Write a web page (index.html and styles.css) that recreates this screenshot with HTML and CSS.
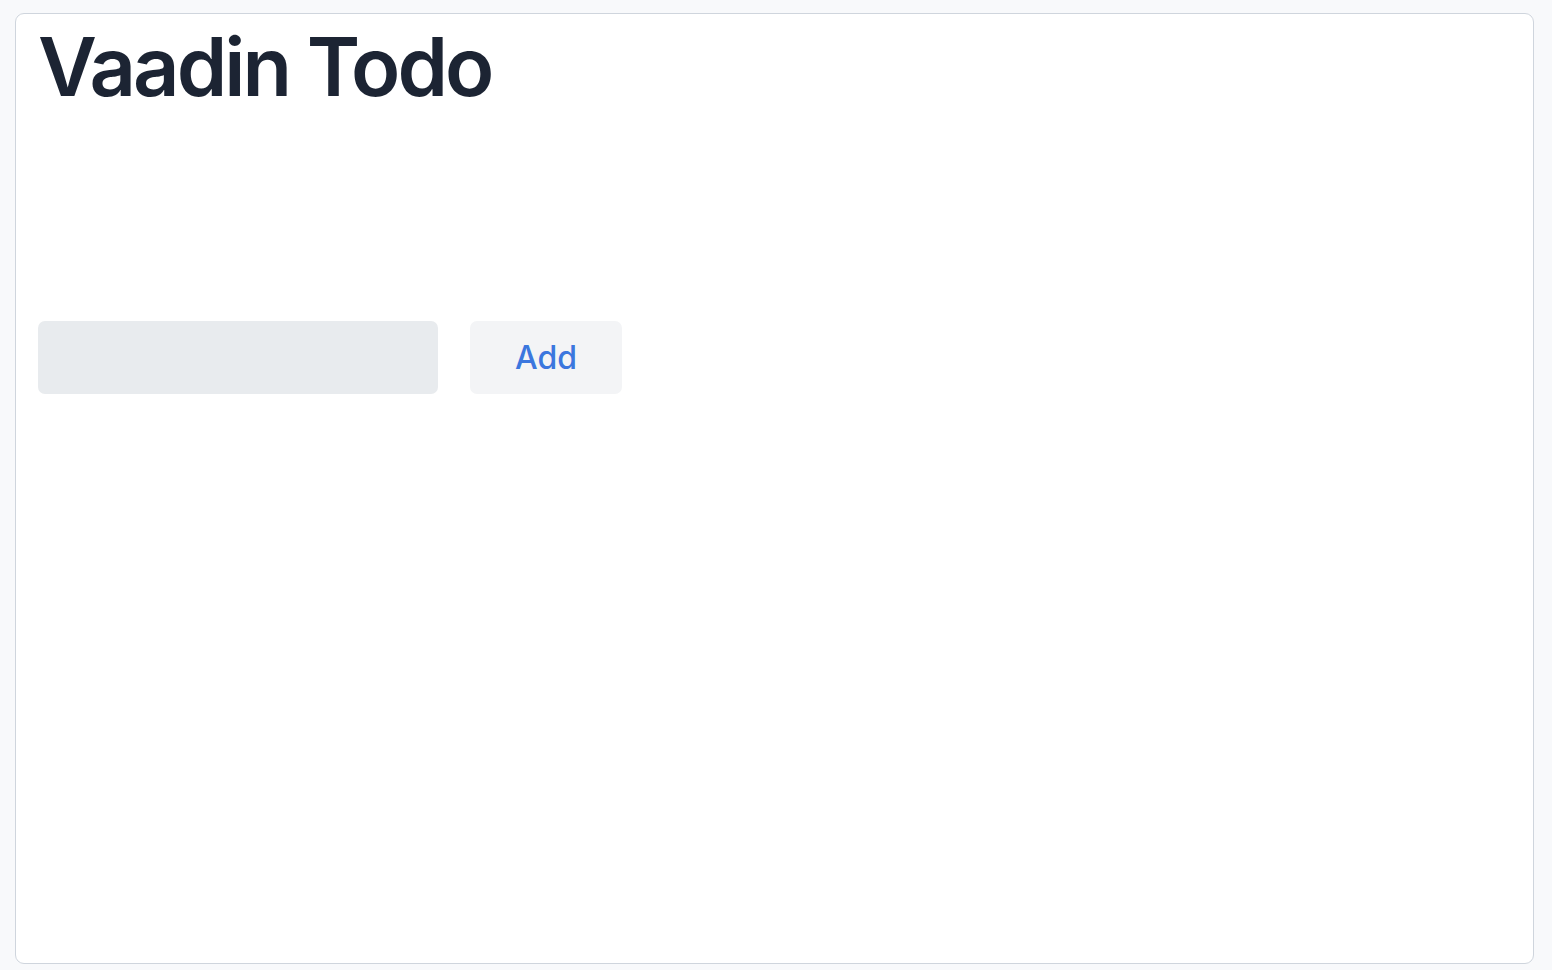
FILE: index.html
```html
<!DOCTYPE html>
<html>
<head>
<meta charset="utf-8">
<link rel="stylesheet" href="styles.css">
</head>
<body>
<main class="card">
  <h1 class="title">Vaadin Todo</h1>
  <div class="form">
    <input class="field" type="text">
    <button class="add">Add</button>
  </div>
</main>
</body>
</html>
```

FILE: styles.css
```css
html, body {
  margin: 0;
  height: 100%;
  background: #f8f9fb;
}
body {
  font-family: Inter, "Noto Sans", sans-serif;
  padding: 13px 18px 6px 15px;
  box-sizing: border-box;
}
.card {
  box-sizing: border-box;
  height: 951px;
  background: #ffffff;
  border: 1.5px solid #cfd5dd;
  border-radius: 9px;
  padding: 0 22px;
}
.title {
  margin: 0;
  padding-top: 1px;
  font-size: 81px;
  font-weight: 600;
  line-height: 104px;
  color: #1c2433;
  letter-spacing: -2.9px;
}
.form {
  display: flex;
  gap: 32px;
  margin-top: 202px;
}
.field {
  width: 400px;
  height: 73px;
  box-sizing: border-box;
  border: none;
  border-radius: 7px;
  background: #e8ebee;
  outline: none;
}
.add {
  width: 152px;
  height: 73px;
  border: none;
  border-radius: 7px;
  background: #f3f4f6;
  color: #3b77de;
  font-family: Inter, "Noto Sans", sans-serif;
  font-size: 32px;
  font-weight: 500;
}
```
